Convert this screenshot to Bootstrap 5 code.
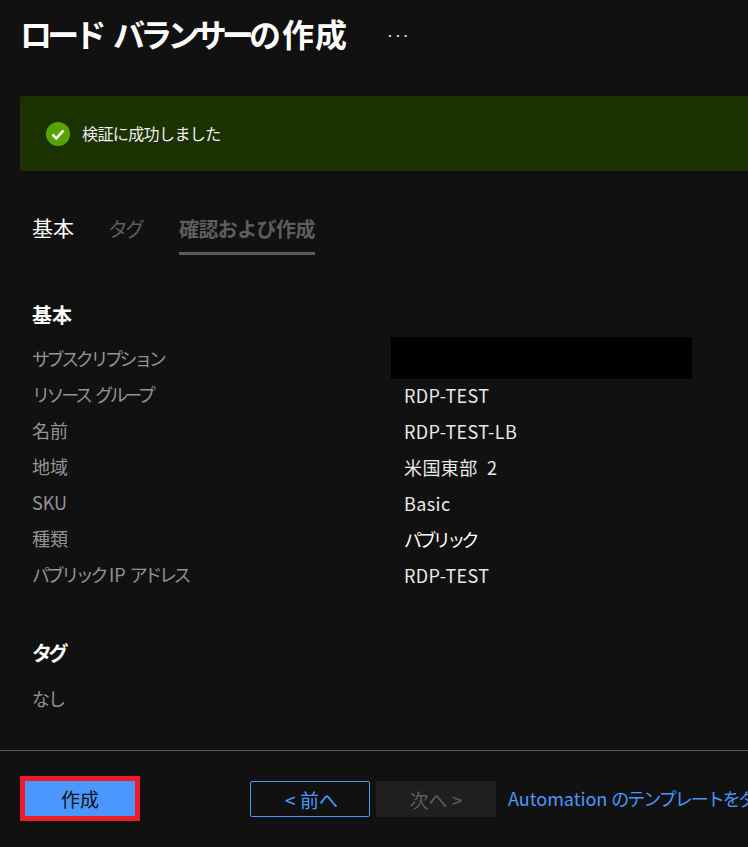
<!DOCTYPE html>
<html lang="ja">
<head>
    <meta charset="UTF-8">
    <meta name="viewport" content="width=device-width, initial-scale=1.0">
    <title>ロード バランサーの作成</title>
    <link rel="stylesheet" href="https://cdn.jsdelivr.net/npm/bootstrap@5.3.0/dist/css/bootstrap.min.css">
    <script src="https://cdn.jsdelivr.net/npm/bootstrap@5.3.0/dist/js/bootstrap.bundle.min.js"></script>
    <style>
        html, body {
            height: 847px;
            overflow: hidden;
        }
        body {
            background-color: #111111;
            color: #fff;
            font-family: "Noto Sans CJK JP", "Noto Sans", sans-serif;
            font-size: 18px;
        }
        /* kana is much narrower in the original font */
        .kana { letter-spacing: -3.4px; word-spacing: 5px; }
        .page-head {
            height: 66px;
            padding-left: 20px;
        }
        .page-title {
            font-size: 32px;
            font-weight: 700;
            letter-spacing: 1px;
            line-height: 66px;
            margin: 0;
        }
        .page-title .kana {
            letter-spacing: -4.8px;
            word-spacing: 9px;
        }
        .more-dots {
            margin-left: 38px;
            margin-top: 4px;
            font-size: 14px;
            letter-spacing: 0;
        }
        .ok-banner {
            height: 75px;
            margin: 30px 0 0 20px;
            padding-left: 26px;
            background: #1c3100;
            border-radius: 2px 0 0 2px;
            font-size: 16px;
            letter-spacing: -.6px;
            color: #f0f0f0;
        }
        .ok-banner svg {
            margin-right: 12px;
        }
        .ok-text {
            padding-bottom: 2px;
        }
        .step-tabs {
            margin: 40px 0 0 32px;
            height: 44px;
            font-size: 20px;
            letter-spacing: -.6px;
        }
        .step-tab {
            line-height: 36px;
            height: 44px;
            color: #5d5d5d;
        }
        .step-tab.is-first {
            color: #fff;
            font-size: 21px;
            line-height: 33px;
            letter-spacing: 0;
            margin-right: 34px;
        }
        .step-tab.is-tag {
            letter-spacing: -3px;
            margin-right: 37px;
        }
        .step-tab.is-current {
            font-weight: 700;
            border-bottom: 3px solid #5a5a5a;
        }
        .summary {
            padding: 42px 0 0 32px;
        }
        .summary-head {
            font-size: 20px;
            font-weight: 700;
            line-height: 36px;
            margin: 0 0 7px;
        }
        .summary-row {
            height: 36px;
            line-height: 36px;
        }
        .summary-row .key {
            width: 372px;
            color: #949494;
            flex: none;
        }
        .summary-row .val {
            color: #e8e8e8;
            margin-top: 1px;
            letter-spacing: .4px;
            word-spacing: 5px;
        }
        .summary-row .val .kana {
            color: #fff;
            letter-spacing: -3.6px;
        }
        .mask-block {
            position: absolute;
            left: 391px;
            top: 337px;
            width: 301px;
            height: 42px;
            background: #000;
        }
        .tag-section {
            padding: 43px 0 0 32px;
        }
        .tag-section .summary-head {
            margin: 0;
        }
        .tag-none {
            color: #949494;
            line-height: 36px;
            margin-top: 9px;
            letter-spacing: -2px;
        }
        .foot-bar {
            position: absolute;
            left: 0;
            right: 0;
            top: 750px;
            height: 97px;
            border-top: 1px solid #5c5c5c;
            padding: 25px 0 0 20px;
            white-space: nowrap;
            overflow: hidden;
        }
        .btn-create {
            width: 120px;
            height: 45px;
            border: 5px solid #ee1c25;
            border-radius: 0;
            background: #4a98ff;
            color: #111;
            font-size: 19px;
            line-height: 1;
            padding: 0;
            margin-right: 110px;
            flex: none;
        }
        .btn-prev, .btn-next {
            width: 120px;
            height: 36px;
            margin-top: 5px;
            border-radius: 2px;
            font-size: 19px;
            line-height: 1;
            padding: 0;
            flex: none;
        }
        .btn-prev {
            border: 1px solid #4a98ff;
            color: #4a98ff;
            background: transparent;
            margin-right: 6px;
            padding-left: 3px;
        }
        .btn-next:disabled {
            border: 0;
            background: #1f1f1f;
            color: #5d5d5d;
            opacity: 1;
            margin-right: 12px;
        }
        .auto-link {
            margin-top: 4px;
            line-height: 36px;
            color: #4a98ff;
            text-decoration: none;
            font-size: 18px;
            flex: none;
        }
        .auto-link .kana {
            letter-spacing: -2px;
        }
    </style>
</head>
<body>

<div class="page-head d-flex align-items-center">
    <h1 class="page-title"><span class="kana">ロード バランサー</span>の作成</h1>
    <span class="more-dots">···</span>
</div>

<div class="ok-banner d-flex align-items-center">
    <svg width="24" height="24" viewBox="0 0 24 24">
        <circle cx="12" cy="12" r="12" fill="#57a300"/>
        <path d="M6.5 12.5l3.8 3.8 7.2-8" fill="none" stroke="#fff" stroke-width="2.6"/>
    </svg>
    <span class="ok-text">検証に成功しました</span>
</div>

<div class="step-tabs d-flex">
    <div class="step-tab is-first">基本</div>
    <div class="step-tab is-tag">タグ</div>
    <div class="step-tab is-current">確認および作成</div>
</div>

<div class="summary">
    <h2 class="summary-head">基本</h2>
    <div class="summary-row d-flex"><div class="key kana">サブスクリプション</div><div class="val"></div></div>
    <div class="summary-row d-flex"><div class="key kana">リソース グループ</div><div class="val">RDP-TEST</div></div>
    <div class="summary-row d-flex"><div class="key">名前</div><div class="val">RDP-TEST-LB</div></div>
    <div class="summary-row d-flex"><div class="key">地域</div><div class="val">米国東部 2</div></div>
    <div class="summary-row d-flex"><div class="key">SKU</div><div class="val">Basic</div></div>
    <div class="summary-row d-flex"><div class="key">種類</div><div class="val"><span class="kana">パブリック</span></div></div>
    <div class="summary-row d-flex"><div class="key"><span class="kana">パブリック</span> IP <span class="kana">アドレス</span></div><div class="val">RDP-TEST</div></div>
</div>
<div class="mask-block"></div>

<div class="tag-section">
    <h2 class="summary-head"><span class="kana">タグ</span></h2>
    <div class="tag-none">なし</div>
</div>

<div class="foot-bar d-flex align-items-start">
    <button type="button" class="btn btn-create">作成</button>
    <button type="button" class="btn btn-prev">&lt; 前へ</button>
    <button type="button" class="btn btn-next" disabled>次へ &gt;</button>
    <a href="#" class="auto-link">Automation <span class="kana">のテンプレートをダウンロードする</span></a>
</div>

</body>
</html>
